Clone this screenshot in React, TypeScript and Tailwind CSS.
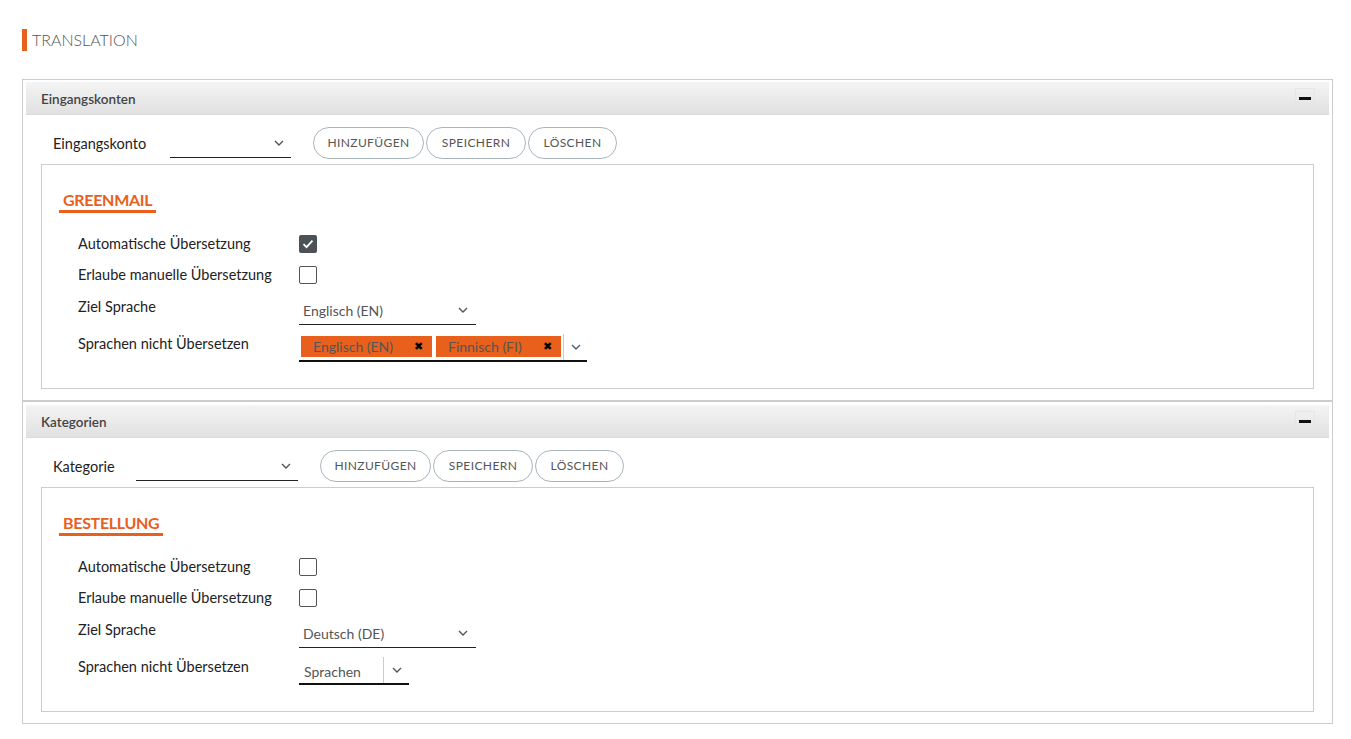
import type { ReactNode } from 'react';

function Chevron({ className = '' }: { className?: string }) {
  return (
    <svg width="10" height="6" viewBox="0 0 10 6" className={className} fill="none">
      <path d="M1 1l4 4 4-4" stroke="currentColor" strokeWidth="1.4" />
    </svg>
  );
}

function Checkbox({ checked }: { checked?: boolean }) {
  if (checked) {
    return (
      <span className="flex h-[18px] w-[18px] items-center justify-center rounded-[2px] bg-[#4b5358]">
        <svg width="12" height="10" viewBox="0 0 12 10" fill="none">
          <path d="M1.5 5.2l3 3 6-6.5" stroke="#fff" strokeWidth="1.8" />
        </svg>
      </span>
    );
  }
  return <span className="block h-[18px] w-[18px] rounded-[2px] border border-[#555] bg-white" />;
}

function PillButton({ children, width }: { children: ReactNode; width: string }) {
  return (
    <button
      className={`flex h-[32px] ${width} items-center justify-center rounded-full border border-[#a9b5bd] bg-white text-[12px] tracking-[0.4px] text-[#555]`}
    >
      {children}
    </button>
  );
}

function Tag({ label, width }: { label: string; width: string }) {
  return (
    <span
      className={`flex h-[21px] ${width} items-center justify-between bg-[#e8601c] pl-[12px] pr-[9px] text-[14px] text-[#555]`}
    >
      <span>{label}</span>
      <span className="text-[11px] text-black">✖</span>
    </span>
  );
}

function FormRow({ label, children, labelPad = '', top }: { label: string; children: ReactNode; labelPad?: string; top?: boolean }) {
  return (
    <div className={`flex ${top ? 'items-start' : 'h-[31px] items-center'}`}>
      <span className={`w-[221px] text-[14.5px] text-[#222] ${top ? 'leading-[20px]' : ''} ${labelPad}`}>{label}</span>
      {children}
    </div>
  );
}

type Settings = {
  name: string;
  auto: boolean;
  target: string;
  tags: { label: string; width: string }[];
};

function SettingsBox({ s }: { s: Settings }) {
  return (
    <div className="mx-[15px] border border-[#ccc] pb-[26px] pl-[17px] pt-[23px]">
      <div className="inline-block border-b-[3px] border-[#e8601c] px-[4px] text-[16px] font-bold leading-[20px] tracking-[-0.3px] text-[#e8601c]">
        {s.name}
      </div>
      <div className="ml-[19px] mt-[15px]">
        <FormRow label="Automatische Übersetzung">
          <Checkbox checked={s.auto} />
        </FormRow>
        <FormRow label="Erlaube manuelle Übersetzung">
          <Checkbox />
        </FormRow>
        <div className="mt-[4px]">
          <FormRow label="Ziel Sprache" labelPad="pt-[3px]" top>
            <div className="flex h-[31px] w-[177px] items-center justify-between border-b border-[#222] pl-[4px] pr-[8px] pt-[2px] text-[14px] text-[#555]">
              <span>{s.target}</span>
              <Chevron className="text-[#555]" />
            </div>
          </FormRow>
        </div>
        <div className="mt-[9px]">
          <FormRow label="Sprachen nicht Übersetzen" top>
            {s.tags.length > 0 ? (
              <div className="flex h-[28px] items-start border-b-2 border-[#111]">
                <div className="ml-[2px] mt-[2px] flex gap-[4px]">
                  {s.tags.map((t) => (
                    <Tag key={t.label} label={t.label} width={t.width} />
                  ))}
                </div>
                <div className="ml-[2px] flex h-full w-[24px] items-center justify-center border-l border-[#ccc]">
                  <Chevron className="text-[#4a5f73]" />
                </div>
              </div>
            ) : (
              <div className="flex h-[28px] items-end border-b-2 border-[#111]">
                <span className="w-[84px] pb-[1px] pl-[5px] text-[14px] text-[#555]">Sprachen</span>
                <div className="flex h-full w-[26px] items-center justify-center border-l border-[#ccc]">
                  <Chevron className="text-[#555]" />
                </div>
              </div>
            )}
          </FormRow>
        </div>
      </div>
    </div>
  );
}

function Panel({
  title,
  field,
  fieldWidth,
  selectWidth,
  topPad,
  settings,
}: {
  title: string;
  field: string;
  fieldWidth: string;
  selectWidth: string;
  topPad: string;
  settings: Settings;
}) {
  return (
    <div className={`border border-[#ccc] px-[3px] pb-[11px] ${topPad}`}>
      <div className="flex h-[33px] items-center justify-between border-b border-[#dcdcdc] bg-gradient-to-b from-[#f4f4f4] to-[#e1e1e1] pl-[15px] pr-[14px]">
        <span className="pt-[3px] text-[13.5px] font-semibold text-[#444]">{title}</span>
        <span className="flex h-[20px] w-[20px] items-center justify-center border border-[#e6e6e6]">
          <span className="block h-[3px] w-[12px] bg-[#111]" />
        </span>
      </div>
      <div className="flex items-center pb-[5px] pl-[27px] pt-[12px]">
        <span className={`${fieldWidth} pt-[2px] text-[14.5px] text-[#222]`}>{field}</span>
        <div className={`flex h-[30px] ${selectWidth} items-center justify-end border-b border-[#222] pr-[7px]`}>
          <Chevron className="text-[#555]" />
        </div>
        <div className="ml-[22px] flex gap-[2px]">
          <PillButton width="w-[111px]">HINZUFÜGEN</PillButton>
          <PillButton width="w-[100px]">SPEICHERN</PillButton>
          <PillButton width="w-[89px]">LÖSCHEN</PillButton>
        </div>
      </div>
      <SettingsBox s={settings} />
    </div>
  );
}

export default function App() {
  return (
    <div className="min-h-screen bg-white px-[22px] pt-[29px] font-['Lato',sans-serif]">
      <div className="flex h-[22px] items-center">
        <span className="h-[22px] w-[5px] bg-[#e8601c]" />
        <span className="ml-[5px] text-[16px] font-light text-[#555]">TRANSLATION</span>
      </div>
      <div className="mt-[28px] w-[1311px]">
        <Panel
          title="Eingangskonten"
          field="Eingangskonto"
          fieldWidth="w-[117px]"
          selectWidth="w-[121px]"
          topPad="pt-[2px]"
          settings={{
            name: 'GREENMAIL',
            auto: true,
            target: 'Englisch (EN)',
            tags: [
              { label: 'Englisch (EN)', width: 'w-[131px]' },
              { label: 'Finnisch (FI)', width: 'w-[125px]' },
            ],
          }}
        />
        <Panel
          title="Kategorien"
          field="Kategorie"
          fieldWidth="w-[83px]"
          selectWidth="w-[162px]"
          topPad="pt-[3px]"
          settings={{
            name: 'BESTELLUNG',
            auto: false,
            target: 'Deutsch (DE)',
            tags: [],
          }}
        />
      </div>
    </div>
  );
}
